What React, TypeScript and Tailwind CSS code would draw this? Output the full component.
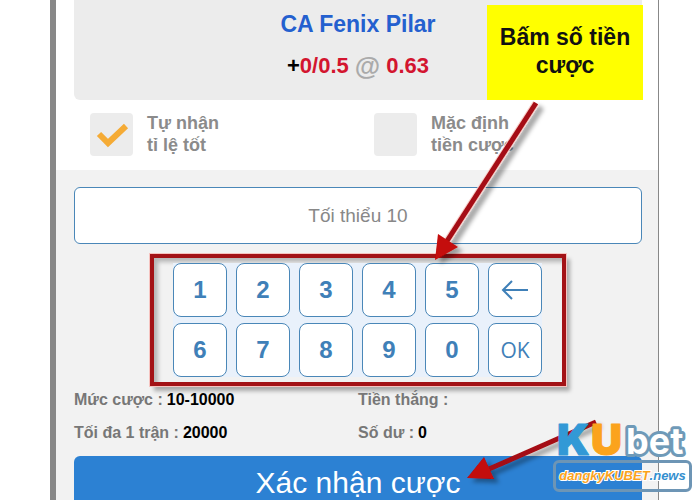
import type { ReactNode } from "react";

const sans = "font-['Liberation_Sans',Arial,sans-serif]";

function Key({ children, label }: { children: ReactNode; label?: string }) {
  return (
    <button
      type="button"
      aria-label={label}
      className="flex h-[54px] w-[54px] items-center justify-center rounded-lg border border-[#4a87b8] bg-white text-2xl font-bold text-[#3f80b8]"
    >
      {children}
    </button>
  );
}

function Option({ id, checked, children }: { id: string; checked?: boolean; children: ReactNode }) {
  return (
    <div className="flex items-center gap-[14px]">
      <div className="relative h-[43px] w-[43px] shrink-0">
        <input
          id={id}
          type="checkbox"
          defaultChecked={checked}
          className="peer block h-full w-full appearance-none rounded bg-[#ececec]"
        />
        <svg
          viewBox="0 0 43 43"
          className="pointer-events-none absolute inset-0 hidden peer-checked:block"
          fill="none"
          stroke="#f5ab35"
          strokeWidth="6"
        >
          <path d="M9 21 L18 30 L36 13" />
        </svg>
      </div>
      <label htmlFor={id} className="text-lg leading-[22px] font-bold text-[#8b8b8b]">
        {children}
      </label>
    </div>
  );
}

function Stat({ name, value }: { name: string; value?: string }) {
  return (
    <div className="flex gap-1">
      <dt className="text-[#777]">{name} :</dt>
      <dd className="text-black">{value}</dd>
    </div>
  );
}

function Arrows() {
  return (
    <svg
      width="700"
      height="500"
      viewBox="0 0 700 500"
      className="pointer-events-none absolute top-0 left-0"
      aria-hidden="true"
    >
      <defs>
        <filter id="shade" x="-20%" y="-20%" width="150%" height="150%">
          <feDropShadow dx="5" dy="4" stdDeviation="2" floodColor="#000" floodOpacity="0.35" />
        </filter>
      </defs>
      <g filter="url(#shade)">
        <path d="M536 103 L447 241" stroke="#f8d0cc" strokeWidth="7" />
        <path d="M536 103 L447 241" stroke="#a50f12" strokeWidth="5" />
        <path d="M435 260 L438 234 L458 247 Z" fill="#c40808" />
      </g>
      <g filter="url(#shade)">
        <path d="M596 422 L489 469" stroke="#a50f12" strokeWidth="5" />
        <path d="M467 478 L484 457 L494 479 Z" fill="#c40808" />
      </g>
    </svg>
  );
}

function Watermark() {
  return (
    <div className="absolute right-[8px] bottom-[8px] flex w-[139px] flex-col">
      <svg viewBox="0 0 139 38" className="h-[38px] w-full overflow-visible" role="img" aria-label="KUbet">
        <g fontFamily="Inter, 'Liberation Sans', sans-serif" fontWeight="900" strokeLinejoin="round" paintOrder="stroke">
          <text x="4" y="33" fontSize="43" fill="#3299d6" stroke="#3299d6" strokeWidth="1">K</text>
          <text x="38" y="33" fontSize="43" fill="#fba31c" stroke="#fba31c" strokeWidth="1">U</text>
          <text x="73" y="32" fontSize="36" fontWeight="700" fill="#fff" stroke="#6f9ab8" strokeWidth="6">bet</text>
        </g>
      </svg>
      <a
        href="#news"
        className="flex h-[32px] items-center justify-center rounded-md border-[3px] border-[#6d95b5] text-[13px] font-bold text-[#fba31c] italic [-webkit-text-stroke:2px_white] [paint-order:stroke_fill]"
      >
        dangkyKUBET<span className="text-[#348fcf]">.news</span>
      </a>
    </div>
  );
}

export default function App() {
  return (
    <div className={`relative h-screen overflow-hidden bg-white ${sans}`}>
      <main className="mr-[41px] ml-[50px] min-h-full border-r border-l-[6px] border-r-[#888] border-l-[#888] bg-[#f2f2f2]">
        <section className="bg-white pr-4 pl-[18px]">
          <div className="flex h-[100px] flex-col items-center gap-3 rounded-b-md bg-[#ececec] pt-2 font-bold">
            <h1 className="text-[23px] leading-8 text-[#2460cf]">CA Fenix Pilar</h1>
            <p className="flex items-center gap-[6px] text-[22px] leading-7 text-[#d3152f]">
              <span>
                <span className="text-black">+</span>0/0.5
              </span>
              <span className="text-[26px] text-[#aaa]">@</span>
              <span>0.63</span>
            </p>
          </div>
          <div className="grid grid-cols-2 gap-4 pt-3 pb-[14px] pl-4">
            <Option id="better-odds" checked>
              Tự nhận
              <br />
              tỉ lệ tốt
            </Option>
            <Option id="default-stake">
              Mặc định
              <br />
              tiền cược
            </Option>
          </div>
        </section>

        <section className="pt-[17px] pr-4 pl-[18px]">
          <input
            type="text"
            aria-label="Tối thiểu 10"
            placeholder="Tối thiểu 10"
            className="block h-[57px] w-full rounded-md border border-[#4a87b8] bg-white text-center text-[19px] text-[#888] placeholder:text-[#888]"
          />
          <div className="mx-auto mt-[10px] w-fit border-4 border-[#a31216] py-[5px] pr-5 pl-[19px] shadow-[4px_5px_4px_rgba(0,0,0,0.3),inset_4px_4px_4px_rgba(0,0,0,0.25)] outline outline-[#f6c4c0]">
            <div className="grid grid-cols-6 gap-x-[9px] gap-y-[6px] bg-[#e9f1fb]">
              <Key>1</Key>
              <Key>2</Key>
              <Key>3</Key>
              <Key>4</Key>
              <Key>5</Key>
              <Key label="Xóa">
                <svg width="28" height="20" viewBox="0 0 28 20" fill="none" stroke="currentColor" strokeWidth="2">
                  <path d="M27 10 H2 M11 1 L2 10 L11 19" />
                </svg>
              </Key>
              <Key>6</Key>
              <Key>7</Key>
              <Key>8</Key>
              <Key>9</Key>
              <Key>0</Key>
              <Key>
                <span className="font-['Open_Sans',sans-serif] text-[21px] font-medium">OK</span>
              </Key>
            </div>
          </div>

          <dl className="mt-[2px] grid grid-cols-2 gap-y-[9px] text-base leading-6 font-bold">
            <Stat name="Mức cược" value="10-10000" />
            <Stat name="Tiền thắng" />
            <Stat name="Tối đa 1 trận" value="20000" />
            <Stat name="Số dư" value="0" />
          </dl>

          <button
            type="button"
            className="mt-[11px] block h-[54px] w-full rounded-md bg-[#2c81d3] text-[30px] leading-8 text-white"
          >
            Xác nhận cược
          </button>
        </section>
      </main>

      <p className="absolute top-[5px] right-[57px] h-[95px] w-[156px] bg-[#ffff00] pt-[18px] text-center text-[23px] leading-7 font-bold text-[#111]">
        Bấm số tiền
        <br />
        cược
      </p>
      <Arrows />
      <Watermark />
    </div>
  );
}
